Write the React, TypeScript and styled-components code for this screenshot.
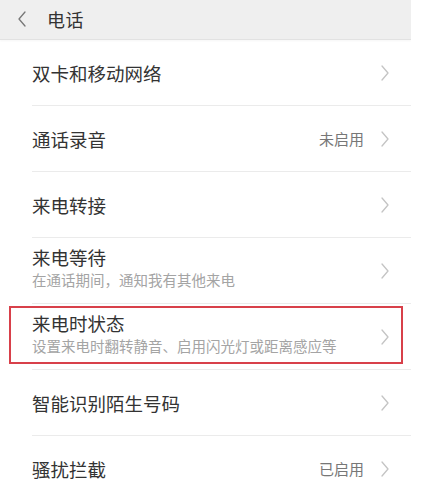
import React from "react";
import styled, { createGlobalStyle } from "styled-components";

const GlobalStyle = createGlobalStyle`
  html, body {
    margin: 0;
    padding: 0;
    background: #fff;
  }
  body {
    font-family: "Noto Sans CJK SC", "Noto Sans", sans-serif;
  }
`;

type Item = {
  title: string;
  desc?: string;
  value?: string;
  marked?: boolean;
};

const items: Item[] = [
  { title: "双卡和移动网络" },
  { title: "通话录音", value: "未启用" },
  { title: "来电转接" },
  { title: "来电等待", desc: "在通话期间，通知我有其他来电" },
  { title: "来电时状态", desc: "设置来电时翻转静音、启用闪光灯或距离感应等", marked: true },
  { title: "智能识别陌生号码" },
  { title: "骚扰拦截", value: "已启用" },
];

function Chevron({ left }: { left?: boolean }) {
  return (
    <svg width="10" height="16" viewBox="0 0 10 16" fill="none">
      <path
        d={left ? "M8 1L2 8l6 7" : "M2 1l6 7-6 7"}
        stroke="currentColor"
        strokeWidth="1.3"
        strokeLinecap="round"
        strokeLinejoin="round"
      />
    </svg>
  );
}

function App() {
  return (
    <Page>
      <GlobalStyle />
      <Header>
        <Back>
          <Chevron left />
        </Back>
        <HeaderTitle>电话</HeaderTitle>
      </Header>
      <List>
        {items.map((item) => (
          <Row key={item.title}>
            <Texts>
              <Title $withDesc={!!item.desc}>{item.title}</Title>
              {item.desc && <Desc>{item.desc}</Desc>}
            </Texts>
            {item.value && <Value>{item.value}</Value>}
            <Arrow>
              <Chevron />
            </Arrow>
            {item.marked && <Mark />}
          </Row>
        ))}
      </List>
    </Page>
  );
}

export default App;

const Page = styled.div`
  width: 411px;
  height: 488px;
  overflow: hidden;
  background: #fff;
`;

const Header = styled.div`
  height: 39px;
  display: flex;
  align-items: center;
  background: #efefef;
  border-bottom: 1px solid #e2e2e2;
  box-shadow: 0 1px 2px rgba(0, 0, 0, 0.04);
  padding-bottom: 2px;
  box-sizing: border-box;
  height: 40px;
`;

const Back = styled.span`
  display: flex;
  color: #777;
  margin-left: 17px;
  margin-right: 20px;
`;

const HeaderTitle = styled.span`
  font-size: 18px;
  color: #333;
  letter-spacing: 0.5px;
`;

const List = styled.div`
  display: flex;
  flex-direction: column;
`;

const Row = styled.div`
  position: relative;
  height: 66px;
  margin-left: 32px;
  display: flex;
  align-items: center;
  box-sizing: border-box;
  border-bottom: 1px solid #ebebeb;
`;

const Texts = styled.div`
  flex: 1;
  display: flex;
  flex-direction: column;
  min-width: 0;
`;

const Title = styled.span<{ $withDesc: boolean }>`
  font-size: 18.5px;
  line-height: 24px;
  color: #333;
  margin-top: ${(p) => (p.$withDesc ? "-6px" : "0")};
`;

const Desc = styled.span`
  font-size: 14.5px;
  line-height: 20px;
  color: #a4a4a4;
  margin-top: 1px;
  white-space: nowrap;
`;

const Value = styled.span`
  font-size: 15px;
  color: #777;
  margin-right: 16px;
`;

const Arrow = styled.span`
  display: flex;
  color: #c4c4c4;
  margin-right: 21px;
`;

const Mark = styled.div`
  position: absolute;
  top: 2px;
  bottom: 5px;
  left: -23px;
  right: 8px;
  border: 2px solid #d8404a;
`;
